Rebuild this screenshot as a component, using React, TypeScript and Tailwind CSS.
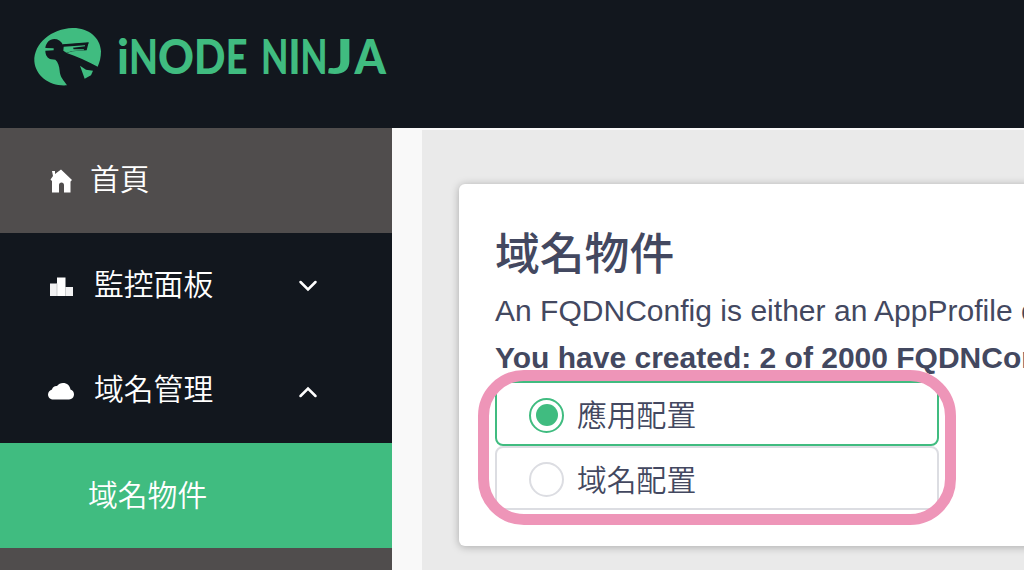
import React, { useState } from "react";

const Logo = () => (
  <svg className="w-[70px] h-[60px]" viewBox="40 35 210 180" fill="#40bc80">
    <path d="M142 210C92 214 48 184 44 138C42 84 96 40 158 38C206 37 242 66 244 108C244 126 240 142 234 154C204 138 170 122 141 113L132 106L131 96L201 93L207 82L130 88C124 77 115 71 104 71C89 72 79 82 77 98L102 99L102 105L77 106C77 119 83 129 95 132L107 133C115 140 119 152 120 166C121 186 132 194 142 210Z" />
    <path d="M130 87L207 81L201 105L158 108L141 113L130 106Z" fill="#12171e" />
    <path d="M132 94L196 90L196 93L160 97L162 102L192 102L194 105L158 107L141 112L131 106Z" />
    <path d="M181 151L199 163L220 166L214 180L195 190Z" />
  </svg>
);

// [letter, x, advance]
const ninjaLetters: [string, number, number][][] = [
  [
    ["i", -1, 12],
    ["N", 11, 29],
    ["O", 40, 36],
    ["D", 76, 31.5],
    ["E", 107.7, 21.8],
  ],
  [
    ["N", 143, 27.5],
    ["I", 170.5, 12],
    ["N", 182.5, 27],
    ["J", 209.5, 26],
    ["A", 236.5, 31.5],
  ],
];

const Wordmark = () => (
  <svg
    className="w-[280px] h-[60px] overflow-visible font-['Lato',sans-serif] font-black"
    viewBox="0 0 280 60"
    fill="#40bc80"
    fontSize="47"
  >
    {ninjaLetters.map((word, i) => (
      <text key={i} y="47">
        {word.map(([letter, x, width], j) => (
          <tspan key={j} x={x} textLength={width} lengthAdjust="spacingAndGlyphs">
            {letter}
          </tspan>
        ))}
      </text>
    ))}
  </svg>
);

const HomeIcon = () => (
  <svg className="w-[26px] h-[26px]" viewBox="0 0 26 26" fill="#fff">
    <path d="M4 4H7V7L13 2.5L24 13L22.5 14.5V25.5H16V18C16 16.5 15 15.5 13.5 15.5S11 16.5 11 18V25.5H4V14L2.5 12.5L5 9Z" />
  </svg>
);

const ChartIcon = () => (
  <svg className="w-[26px] h-[26px]" viewBox="0 0 26 26">
    <path d="M2 10.5H9.5V23H2ZM17 14H25V23H17Z" fill="#f2f2f3" />
    <path d="M9 4.5H17.5V23H9Z" fill="#fff" />
    <path d="M9 10.5V23M17.5 14V23" stroke="#b9bbbd" strokeWidth={0.7} />
  </svg>
);

const CloudIcon = () => (
  <svg className="w-[26px] h-[26px]" viewBox="0 0 26 26" fill="#fff">
    <path d="M5.5 21.5C2.5 21.5 0 19.5 0 16.5C0 14 2 12.2 4 11.5C4.5 9 6.5 7.8 9 8C10.5 6 12.5 5 15 5C19 5 22 7.7 22.5 11.5C24.7 12.3 26 14 26 16.3C26 19.3 24 21.5 21 21.5Z" />
  </svg>
);

const Chevron = ({ up = false }: { up?: boolean }) => (
  <svg className="w-5 h-5" viewBox="0 0 20 20" fill="none" stroke="#fff" strokeWidth={2.5} strokeLinecap="round">
    <path d={up ? "M2.5 15L10 7.5L17.5 15" : "M2.5 6L10 13.5L17.5 6"} />
  </svg>
);

const options = ["應用配置", "域名配置"];

const App = () => {
  const [isMonitorOpen, setIsMonitorOpen] = useState(false);
  const [isDomainOpen, setIsDomainOpen] = useState(true);
  const [selected, setSelected] = useState(0);

  return (
    <div className="w-[1024px] h-[570px] overflow-hidden flex flex-col bg-[#f9f9f9] font-['Liberation_Sans','Noto_Sans_CJK_TC',sans-serif]">
      <header className="h-[127.5px] shrink-0 bg-[#12171e] flex items-start pt-[27px] pl-[33px] gap-[15px]">
        <Logo />
        <Wordmark />
      </header>

      <div className="flex flex-1 min-h-0">
        <nav className="w-[392px] shrink-0 bg-[#504d4d] text-white text-[29.8px] leading-none font-[350]">
          <a href="#" className="h-[105.5px] flex items-center pl-12 gap-4">
            <HomeIcon />
            <span>首頁</span>
          </a>
          <button
            className="h-[105px] w-full bg-[#12171e] flex items-center pl-12 pr-[74px]"
            onClick={() => setIsMonitorOpen(!isMonitorOpen)}
          >
            <ChartIcon />
            <span className="flex-1 text-left ml-5 -mt-0.5">監控面板</span>
            <Chevron up={isMonitorOpen} />
          </button>
          <button
            className="h-[105px] w-full bg-[#12171e] flex items-center pl-12 pr-[74px]"
            onClick={() => setIsDomainOpen(!isDomainOpen)}
          >
            <CloudIcon />
            <span className="flex-1 text-left ml-5 -mt-0.5">域名管理</span>
            <Chevron up={isDomainOpen} />
          </button>
          {isDomainOpen && (
            <a href="#" className="h-[105px] bg-[#40bc80] flex items-center pl-[88px]">
              域名物件
            </a>
          )}
        </nav>

        <main className="flex-1 min-w-0 ml-[30px] mt-0.5 bg-[#eaeaea] pl-[37px] pt-[54.5px] text-[#434860]">
          <section className="w-[640px] h-[362px] bg-white rounded-md shadow-[0_1px_8px_rgba(0,0,0,0.28)] pl-9 pt-[42px] whitespace-nowrap">
            <h1 className="text-[44.8px] leading-[56px] font-medium">域名物件</h1>
            <p className="text-[30px] leading-[46px] mt-1.5 tracking-[0.02px]">
              An FQDNConfig is either an AppProfile or
            </p>
            <p className="text-[30px] leading-[47px] font-bold">You have created: 2 of 2000 FQDNConfigs</p>

            <div className="relative w-[444px]">
              {options.map((option, i) => (
                <label
                  key={option}
                  className={`h-[64.5px] flex items-center pl-8 pt-1 gap-[13px] border-2 rounded-lg text-[29.8px] leading-none font-[350] cursor-pointer ${
                    selected === i ? "border-[#40bc80]" : "border-[#dcdde2]"
                  }`}
                >
                  <input
                    type="radio"
                    name="config"
                    className="sr-only"
                    checked={selected === i}
                    onChange={() => setSelected(i)}
                  />
                  <span
                    className={`size-[35px] rounded-full border-2 flex items-center justify-center ${
                      selected === i ? "border-[#40bc80]" : "border-[#dcdde2]"
                    }`}
                  >
                    {selected === i && <span className="size-[22px] rounded-full bg-[#40bc80]" />}
                  </span>
                  <span className="pt-0.5">{option}</span>
                </label>
              ))}
              <div className="absolute -left-[17px] -right-[17px] -top-[11px] -bottom-[15px] border-[11px] border-[#ee95b8] rounded-[46px] pointer-events-none" />
            </div>
          </section>
        </main>
      </div>
    </div>
  );
};

export default App;
